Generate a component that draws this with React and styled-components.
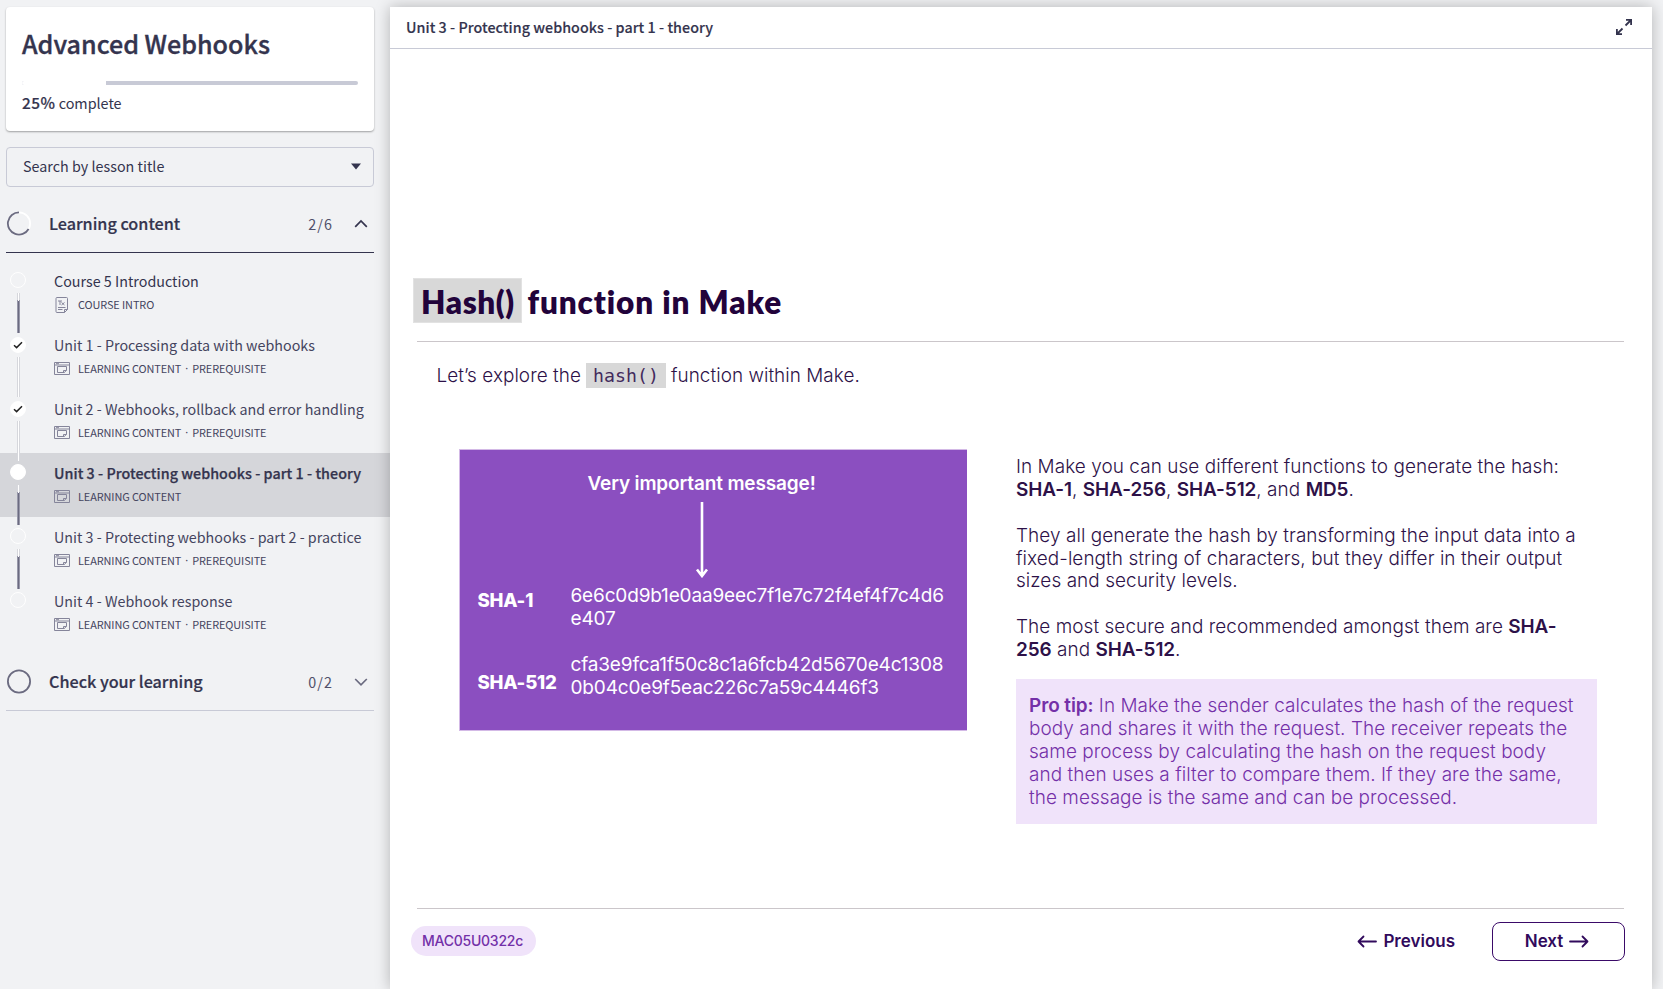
import React from "react";
import styled, { createGlobalStyle } from "styled-components";

const ui = '"Noto Sans CJK SC", "Noto Sans", sans-serif';
const copy = 'Inter, "Liberation Sans", sans-serif';

const Global = createGlobalStyle`
  * { box-sizing: border-box; }
  body { margin: 0; background: #f1f2f4; font-family: ${ui}; color: #34344e; overflow: hidden; }
  p, h1, h2 { margin: 0; font-weight: inherit; }
`;

const Page = styled.div`display: flex; height: 989px; overflow: hidden;`;

const Sidebar = styled.aside`
  width: 390px; flex: none; padding-top: 7px;
  display: flex; flex-direction: column;
`;
const Card = styled.section`
  margin: 0 16px 16px 6px; height: 124px; padding: 20px 16px 0;
  background: #fff; border-radius: 4px;
  box-shadow: 0 1px 2px rgba(0, 0, 0, 0.34);
`;
const CourseTitle = styled.h1`
  font-size: 25.1px; line-height: 32px; font-weight: 500; letter-spacing: 0;
  -webkit-text-stroke: 0.35px currentColor; white-space: nowrap;
`;
const Progress = styled.div`
  margin-top: 22px; height: 4px; border-radius: 2px; background: #c8cad6; overflow: hidden;
`;
const ProgressDone = styled.div`height: 4px; background: #fff;`;
const Complete = styled.p`
  margin-top: 6px; font-size: 14.4px; line-height: 22px; letter-spacing: -0.03px;
  b { font-weight: 500; font-size: 15.4px; letter-spacing: 0.5px; -webkit-text-stroke: 0.2px currentColor; }
`;
const Search = styled.div`
  margin: 0 16px 9px 6px; height: 40px; padding: 0 11px 3px 16px;
  display: flex; align-items: center; justify-content: space-between;
  border: 1px solid #c8cad6; border-radius: 4px;
  font-size: 14.3px; letter-spacing: 0.02px;
  svg { margin-top: 2px; }
`;
const SectionHead = styled.div`
  margin: 0 16px 0 6px; height: 57px; padding: 0 6px 0 0;
  display: flex; align-items: center;
  border-bottom: 1px solid ${(p) => (p.$open ? "#34344e" : "#c8cad6")};
`;
const SectionName = styled.h2`
  margin: 0 0 2px 18px; flex: 1; font-size: 16.2px; font-weight: 500; line-height: 24px;
  letter-spacing: -0.01px; -webkit-text-stroke: 0.2px currentColor;
`;
const Count = styled.span`
  margin-right: 21px; font-size: 14.3px; line-height: 24px; letter-spacing: 1.1px; color: #50506a;
`;
const Lessons = styled.div`padding: 8px 0 9px;`;
const Lesson = styled.div`
  height: 64px; display: flex; padding-left: 10px;
  background: ${(p) => (p.$active ? "#d5d6da" : "transparent")};
`;
const Rail = styled.div`
  width: 16px; margin-right: 28px; padding-top: ${(p) => (p.$done ? "12px" : "11px")};
  display: flex; flex-direction: column; align-items: center;
`;
const Dot = styled.div`
  width: 16px; height: 16px; flex: none; border-radius: 50%;
  border: 1px solid #fff; background: ${(p) => (p.$fill ? "#fff" : "transparent")};
  display: flex; align-items: center; justify-content: center;
`;
const Link = styled.div`
  position: relative; z-index: 1; width: 3px; height: 40px; flex: none;
  margin-top: ${(p) => (p.$done ? "4px" : "5px")}; margin-left: 1px;
  border: solid #d6d7dc; border-width: 0 1px;
  background: ${(p) => (p.$done ? "#fff" : "linear-gradient(#fff 8px, #6b6b80 8px)")};
  ${(p) => !p.$done && "border-image: linear-gradient(#d6d7dc 8px, #9898aa 8px) 1;"}
`;
const LessonBody = styled.div`padding-top: 10px; white-space: nowrap;`;
const LessonTitle = styled.p`
  font-size: 14.3px; line-height: 20px; letter-spacing: 0.01px;
  color: ${(p) => (p.$strong ? "#34344e" : "#44445e")};
  font-weight: ${(p) => (p.$active ? 500 : 400)};
  ${(p) => p.$active && "-webkit-text-stroke: 0.25px currentColor; letter-spacing: 0.04px;"}
`;
const Meta = styled.div`
  margin-top: 4px; display: flex; align-items: center; height: 18px;
  font-size: 10.9px; line-height: 18px; letter-spacing: -0.09px; color: #44445e;
  svg { margin: 1px 8px 0 0; }
`;
const MidDot = styled.span`width: 11px; text-align: center; font-family: "Noto Sans", sans-serif;`;

const Main = styled.main`
  width: 1262px; margin-top: 7px; flex: none; background: #fff;
  display: flex; flex-direction: column;
  box-shadow: 0 0 14px rgba(0, 0, 0, 0.26);
`;
const TopBar = styled.header`
  height: 42px; flex: none; padding: 0 20px 2px 16px; display: flex; align-items: center;
  justify-content: space-between; border-bottom: 1px solid #c8cad6;
  font-size: 14.3px; font-weight: 500; letter-spacing: 0.04px; -webkit-text-stroke: 0.15px currentColor;
`;
const Slide = styled.article`
  flex: 1; display: flex; flex-direction: column; padding-top: 229px;
  font-family: ${copy}; color: #2d1148;
`;
const Heading = styled.h1`
  height: 45px; padding-left: 23px; display: flex; align-items: flex-start;
  font: 800 31.5px/48px Lato, ${copy}; letter-spacing: 0.88px; color: #22033b; white-space: nowrap;
`;
const HeadingCode = styled.span`
  width: 109px; height: 45px; padding-left: 7px; margin-right: 5.5px; line-height: 46px;
  background: #d8d8d8; border: 1px solid #e2e2e2; letter-spacing: 0.6px;
`;
const Rule = styled.hr`
  width: 1207px; height: 1px; flex: none; border: 0; margin: ${(p) => p.$top} 0 0 27px; background: #cbc6ca;
`;
const Lead = styled.p`
  margin: 20px 0 0 46.5px !important; height: 27px; display: flex; align-items: center;
  font-size: 18.9px; font-weight: 330; line-height: 25px; letter-spacing: 0.06px; white-space: nowrap;
  span { padding-bottom: 1px; }
`;
const Code = styled.code`
  width: 80px; height: 25px; margin: 0 5px; text-align: center; background: #d8d8d8; color: #432a5c;
  font: 400 18.2px/25px "DejaVu Sans Mono", monospace;
`;
const Columns = styled.div`display: flex; align-items: flex-start; margin: 60px 0 0 69px;`;
const Diagram = styled.div`
  width: 508px; height: 282px; flex: none; padding: 22px 0 0 17.5px; background: #8b4fc0;
  border: solid #d3b9e6; border-width: 1px 0 1px 1px;
  color: #fff; font-size: 19px; white-space: nowrap;
`;
const Message = styled.p`
  padding-left: 110px; font-size: 19px; line-height: 24px; font-weight: 600; letter-spacing: -0.14px;
`;
const Arrow = styled.svg`display: block; margin: 6px 0 7px 217.5px;`;
const HashRow = styled.div`display: flex; height: 46px; margin-bottom: 23px; line-height: 22.8px;`;
const HashName = styled.span`
  width: 93px; padding-top: ${(p) => p.$drop}; font-weight: 800; font-size: 18.6px; letter-spacing: -0.25px;
`;
const HashValue = styled.span`letter-spacing: -0.16px; font-weight: 400;`;
const Notes = styled.div`
  width: 581px; margin: 7px 0 0 49px; font-size: 18.95px; font-weight: 340; line-height: 22.88px;
  letter-spacing: 0.06px; white-space: nowrap;
  b { font-weight: 600; letter-spacing: -0.08px; }
`;
const Tip = styled.p`
  margin-top: 17.3px !important; height: 145px; padding: 16px 0 0 13px; background: #f0e3fa; color: #7430a8;
`;
const Paragraph = styled.p`& + & { margin-top: 22.88px; }`;
const Footer = styled.footer`
  height: 80px; flex: none; padding: 13px 27px 0 21px; display: flex; align-items: flex-start;
  font-size: 17px; font-weight: 600; color: #310a5c; 
`;
const Pill = styled.span`
  width: 125px; height: 30px; margin-top: 4px; border-radius: 15px; background: #f0e3fa; color: #7330a8;
  padding-left: 11px; font-size: 14px; line-height: 30px; font-weight: 500; letter-spacing: -0.24px;
  margin-right: auto;
`;
const NavButton = styled.span`
  height: 39px; display: flex; align-items: center; justify-content: center; gap: 6px; padding-bottom: 1px;
  ${(p) => (p.$outlined
    ? "width: 133px; padding-right: 3px; border: 1.5px solid #3a0a68; border-radius: 8px;"
    : "margin-right: 37px;")}
`;

const RingIcon = styled.svg`flex: none; margin-bottom: 1px;`;
const Ring = ({ partial }) => (
  <RingIcon width="25" height="25" viewBox="0 0 25 25" fill="none" strokeWidth="1.8">
    <circle cx="13" cy="12.5" r="11.1" stroke={partial ? "#fff" : "#6b6b80"} />
    {partial && <path d="M13 1.4A11.1 11.1 0 1 0 22.600 18" stroke="#6b6b80" />}
  </RingIcon>
);
const Chevron = ({ up }) => (
  <svg width="14" height="10" viewBox="0 0 14 10" fill="none" stroke={up ? "#34344e" : "#6b6b80"} strokeWidth="1.7">
    <path d={up ? "M1.2 7.8L7 2L12.8 7.8" : "M1.2 2L7 7.8L12.8 2"} />
  </svg>
);
const Check = () => (
  <svg width="10" height="8" viewBox="0 0 10 8" fill="none" stroke="#222" strokeWidth="1.5">
    <path d="M1 4.2L3.6 6.6L9 1.3" />
  </svg>
);
const WindowIcon = () => (
  <svg width="16" height="13" viewBox="0 0 16 13" fill="none" stroke="#85859a">
    <path d="M.5 .5H15.500V12.500H.5ZM.5 3H15.500M3.500 4.500H12.500V8L10.500 10.500H3.500ZM12.500 8.500H9.500V10.500M2 1.700H5" />
  </svg>
);
const DocIcon = () => (
  <svg width="16" height="16" viewBox="0 0 16 16" fill="none" stroke="#85859a">
    <path d="M3 .5H12.500Q13.500 .5 13.500 1.500V12.500L10.500 15.500H3Q2 15.500 2 14.500V1.500Q2 .5 3 .5ZM13.500 12.500H10.500V15.500M4 4H8M6 4V8M7.500 5.500L10.500 8M10.500 5.500L7.500 8M4 10.500H11.500M4 12.500H8.500" />
  </svg>
);
const NavArrow = ({ left }) => (
  <svg width="20" height="14" viewBox="0 0 20 14" fill="none" stroke="#310a5c" strokeWidth="1.8" strokeLinecap="round" strokeLinejoin="round">
    <path d={left ? "M19 7.500H1.500M6.500 2.500L1.500 7.500L6.500 12.500" : "M1 7.500H18.500M13.500 2.500L18.500 7.500L13.500 12.500"} />
  </svg>
);

const lessons = [
  { title: "Course 5 Introduction", kind: "COURSE INTRO", doc: true },
  { title: "Unit 1 - Processing data with webhooks", done: true, pre: true },
  { title: "Unit 2 - Webhooks, rollback and error handling", done: true, pre: true },
  { title: "Unit 3 - Protecting webhooks - part 1 - theory", active: true },
  { title: "Unit 3 - Protecting webhooks - part 2 - practice", pre: true },
  { title: "Unit 4 - Webhook response", pre: true, last: true },
];

const Section = ({ name, count, open }) => (
  <SectionHead $open={open}>
    <Ring partial={open} />
    <SectionName>{name}</SectionName>
    <Count>{count}</Count>
    <Chevron up={open} />
  </SectionHead>
);

export default function App() {
  return (
    <Page>
      <Global />
      <Sidebar>
        <Card>
          <CourseTitle>Advanced Webhooks</CourseTitle>
          <Progress><ProgressDone style={{ width: "25%" }} /></Progress>
          <Complete><b>25%</b> complete</Complete>
        </Card>
        <Search>
          <span>Search by lesson title</span>
          <svg width="12" height="7" viewBox="0 0 12 7"><path d="M1 .5H11L6 6.500Z" fill="#34344e" /></svg>
        </Search>
        <Section name="Learning content" count="2/6" open />
        <Lessons>
          {lessons.map((l, i) => (
            <Lesson key={l.title} $active={l.active}>
              <Rail $done={l.done}>
                <Dot $fill={l.done || l.active}>{l.done && <Check />}</Dot>
                {!l.last && <Link $done={l.done} />}
              </Rail>
              <LessonBody>
                <LessonTitle $active={l.active} $strong={i === 0 || l.active}>{l.title}</LessonTitle>
                <Meta>
                  {l.doc ? <DocIcon /> : <WindowIcon />}
                  <span>{l.kind || "LEARNING CONTENT"}</span>
                  {l.pre && <><MidDot>·</MidDot><span>PREREQUISITE</span></>}
                </Meta>
              </LessonBody>
            </Lesson>
          ))}
        </Lessons>
        <Section name="Check your learning" count="0/2" />
      </Sidebar>
      <Main>
        <TopBar>
          <span>Unit 3 - Protecting webhooks - part 1 - theory</span>
          <svg width="16" height="16" viewBox="0 0 16 16" fill="none" stroke="#34344e" strokeWidth="1.8">
            <path d="M9.500 6.500L14.500 1.500M10 .9H15.100V6M6.500 9.500L1.500 14.500M.9 10V15.100H6" />
          </svg>
        </TopBar>
        <Slide>
          <Heading><HeadingCode>Hash()</HeadingCode>function in Make</Heading>
          <Rule $top="18px" />
          <Lead><span>Let’s explore the</span><Code>hash()</Code><span>function within Make.</span></Lead>
          <Columns>
            <Diagram>
              <Message>Very important message!</Message>
              <Arrow width="14" height="76" viewBox="0 0 14 76" fill="none" stroke="#fff" strokeWidth="2.6">
                <path d="M7 0V74M2 67.500L7 74L12 67.500" />
              </Arrow>
              <HashRow>
                <HashName $drop="4px">SHA-1</HashName>
                <HashValue>6e6c0d9b1e0aa9eec7f1e7c72f4ef4f7c4d6<br />e407</HashValue>
              </HashRow>
              <HashRow>
                <HashName $drop="17px">SHA-512</HashName>
                <HashValue>cfa3e9fca1f50c8c1a6fcb42d5670e4c1308<br />0b04c0e9f5eac226c7a59c4446f3</HashValue>
              </HashRow>
            </Diagram>
            <Notes>
              <Paragraph>
                In Make you can use different functions to generate the hash:<br />
                <b>SHA-1</b>, <b>SHA-256</b>, <b>SHA-512</b>, and <b>MD5</b>.
              </Paragraph>
              <Paragraph>
                They all generate the hash by transforming the input data into a<br />
                fixed-length string of characters, but they differ in their output<br />
                sizes and security levels.
              </Paragraph>
              <Paragraph>
                The most secure and recommended amongst them are <b>SHA-<br />256</b> and <b>SHA-512</b>.
              </Paragraph>
              <Tip>
                <b>Pro tip:</b> In Make the sender calculates the hash of the request<br />
                body and shares it with the request. The receiver repeats the<br />
                same process by calculating the hash on the request body<br />
                and then uses a filter to compare them. If they are the same,<br />
                the message is the same and can be processed.
              </Tip>
            </Notes>
          </Columns>
          <Rule $top="auto" />
          <Footer>
            <Pill>MAC05U0322c</Pill>
            <NavButton><NavArrow left />Previous</NavButton>
            <NavButton $outlined>Next<NavArrow /></NavButton>
          </Footer>
        </Slide>
      </Main>
    </Page>
  );
}
